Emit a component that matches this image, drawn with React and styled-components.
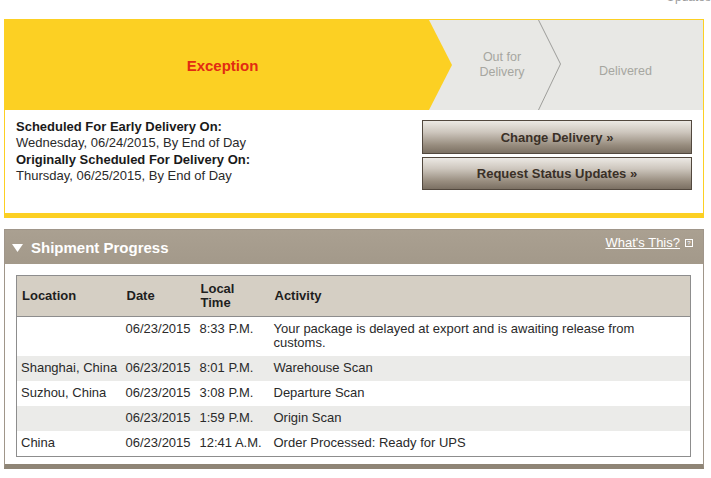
import styled, { createGlobalStyle } from "styled-components";

const GlobalStyle = createGlobalStyle`
  *, *::before, *::after {
    box-sizing: border-box;
  }
  html, body {
    margin: 0;
    padding: 0;
    background: #fff;
  }
  body {
    font-family: "Liberation Sans", Arial, sans-serif;
    font-size: 13px;
    color: #222;
  }
`;

const SPage = styled.div`
  width: 700px;
  margin: 0 7px 0 4px;
`;

const STopStrip = styled.div`
  height: 19px;
  overflow: hidden;
  text-align: right;
  margin-right: -7px;
`;

const STopText = styled.div`
  margin-top: -10px;
  padding-right: 0;
  font-size: 12px;
  line-height: 14px;
  color: #9a9a9a;
`;

const SCard = styled.div`
  border: 1px solid #fcd023;
  border-bottom-width: 5px;
`;

const SBand = styled.div`
  display: flex;
  height: 90px;
  background: #e8e8e5;
`;

const SStep = styled.div`
  position: relative;
  display: flex;
  align-items: center;
  justify-content: center;
  text-align: center;
  flex: ${(p) => p.$flex};
  padding: ${(p) => p.$pad};
  font-size: 12.5px;
  line-height: 15px;
  color: #a6a6a0;
`;

const SCurrentStep = styled(SStep)`
  background: #fcd023;
  clip-path: polygon(0 0, calc(100% - 23px) 0, 100% 50%, calc(100% - 23px) 100%, 0 100%);
  font-size: 15px;
  font-weight: bold;
  color: #e22b12;
`;

const SDivider = styled.svg`
  position: absolute;
  left: 0;
  top: 0;
`;

const SInfo = styled.div`
  display: flex;
  justify-content: space-between;
  height: 103px;
  padding: 9px 11px 0 11px;
  line-height: 16.4px;
`;

const SDates = styled.div``;

const SLabel = styled.div`
  font-weight: bold;
  color: #1a1a1a;
`;

const SValue = styled.div`
  color: #2a2a2a;
`;

const SButtons = styled.div`
  display: flex;
  flex-direction: column;
  gap: 3px;
  width: 270px;
  padding-top: 1px;
`;

const SButton = styled.button`
  height: ${(p) => p.$h}px;
  width: 100%;
  border: 1px solid #52483e;
  background: linear-gradient(#ece9e4 0%, #cdc6bd 35%, #988d7f 75%, #7b7063 100%);
  font-family: "Liberation Sans", Arial, sans-serif;
  font-size: 13px;
  font-weight: bold;
  color: #3a3027;
  padding: 0;
  cursor: pointer;
`;

const SProgress = styled.div`
  margin-top: 11px;
  border: 1px solid #a0968a;
  border-bottom: 5px solid #8f8576;
`;

const SProgressHead = styled.div`
  display: flex;
  align-items: center;
  justify-content: space-between;
  height: 34px;
  padding: 0 10px 0 7px;
  background: linear-gradient(#aaa091, #a3998a);
  color: #fff;
`;

const STitle = styled.div`
  display: flex;
  align-items: center;
  gap: 8px;
  font-size: 15px;
  font-weight: bold;
  padding-top: 1px;
`;

const SWhatsThis = styled.div`
  display: flex;
  align-items: center;
  gap: 5px;
  margin-top: -10px;
`;

const SLink = styled.a`
  color: #fff;
  text-decoration: underline;
  font-size: 13px;
`;

const SHelpBox = styled.span`
  display: inline-flex;
  align-items: center;
  justify-content: center;
  width: 8px;
  height: 8px;
  border: 1px solid #fff;
  font-size: 6px;
  line-height: 1;
  margin-top: 1px;
`;

const SProgressBody = styled.div`
  padding: 11px 12px 7px 11px;
  background: #fff;
`;

const STable = styled.table`
  width: 100%;
  border-collapse: collapse;
  border: 1px solid #8d8d8d;
  font-size: 13px;
  line-height: 14px;
`;

const SHeadCell = styled.th`
  background: #d5cfc4;
  text-align: left;
  font-weight: bold;
  color: #1e1e1e;
  padding: 6px 5px;
  border-bottom: 1px solid #8d8d8d;
  width: ${(p) => p.$w || "auto"};
  vertical-align: middle;
`;

const SRow = styled.tr`
  background: ${(p) => (p.$alt ? "#ebebe9" : "#fff")};
`;

const SCell = styled.td`
  padding: 5px ${(p) => (p.$wide ? "20px" : "4px")} 6px 4px;
  vertical-align: top;
  color: #2a2a2a;
  white-space: ${(p) => (p.$wide ? "normal" : "nowrap")};
`;

const activity = [
  { loc: "", date: "06/23/2015", time: "8:33 P.M.", text: "Your package is delayed at export and is awaiting release from customs." },
  { loc: "Shanghai, China", date: "06/23/2015", time: "8:01 P.M.", text: "Warehouse Scan" },
  { loc: "Suzhou, China", date: "06/23/2015", time: "3:08 P.M.", text: "Departure Scan" },
  { loc: "", date: "06/23/2015", time: "1:59 P.M.", text: "Origin Scan" },
  { loc: "China", date: "06/23/2015", time: "12:41 A.M.", text: "Order Processed: Ready for UPS" },
];

const App = () => {
  return (
    <>
      <GlobalStyle />
      <SPage>
        <STopStrip>
          <STopText>Updates</STopText>
        </STopStrip>

        <SCard>
          <SBand>
            <SCurrentStep $flex="0 0 447px" $pad="0 12px 0 0">Exception</SCurrentStep>
            <SStep $flex="0 0 86px" $pad="0 0 0 14px">
              Out for
              <br />
              Delivery
            </SStep>
            <SStep $flex="1" $pad="12px 0 0 10px">
              <SDivider width="24" height="90" viewBox="0 0 24 90">
                <polyline points="0.5,0 22.5,44 0.5,90" fill="none" stroke="#8a8a86" strokeWidth="0.8" />
              </SDivider>
              Delivered
            </SStep>
          </SBand>

          <SInfo>
            <SDates>
              <SLabel>Scheduled For Early Delivery On:</SLabel>
              <SValue>Wednesday, 06/24/2015, By End of Day</SValue>
              <SLabel>Originally Scheduled For Delivery On:</SLabel>
              <SValue>Thursday, 06/25/2015, By End of Day</SValue>
            </SDates>
            <SButtons>
              <SButton type="button" $h={34}>Change Delivery »</SButton>
              <SButton type="button" $h={33}>Request Status Updates »</SButton>
            </SButtons>
          </SInfo>
        </SCard>

        <SProgress>
          <SProgressHead>
            <STitle>
              <svg width="11" height="8" viewBox="0 0 11 8">
                <polygon points="0,0 11,0 5.5,8" fill="#fff" />
              </svg>
              Shipment Progress
            </STitle>
            <SWhatsThis>
              <SLink href="#">What's This?</SLink>
              <SHelpBox>?</SHelpBox>
            </SWhatsThis>
          </SProgressHead>

          <SProgressBody>
            <STable>
              <thead>
                <tr>
                  <SHeadCell $w="105px">Location</SHeadCell>
                  <SHeadCell $w="74px">Date</SHeadCell>
                  <SHeadCell $w="74px">
                    Local
                    <br />
                    Time
                  </SHeadCell>
                  <SHeadCell>Activity</SHeadCell>
                </tr>
              </thead>
              <tbody>
                {activity.map((row, i) => (
                  <SRow key={i} $alt={i % 2 === 1}>
                    <SCell>{row.loc}</SCell>
                    <SCell>{row.date}</SCell>
                    <SCell>{row.time}</SCell>
                    <SCell $wide>{row.text}</SCell>
                  </SRow>
                ))}
              </tbody>
            </STable>
          </SProgressBody>
        </SProgress>
      </SPage>
    </>
  );
};

export default App;
